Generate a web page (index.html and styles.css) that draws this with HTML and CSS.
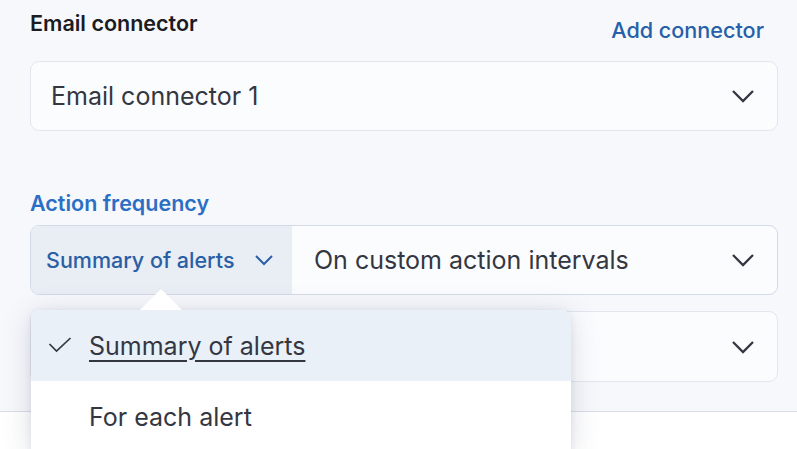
FILE: index.html
```html
<!DOCTYPE html>
<html>
<head>
<meta charset="utf-8">
<link rel="stylesheet" href="styles.css">
</head>
<body>
<div class="panel">
  <div class="head-row">
    <div class="label">Email connector</div>
    <a class="link">Add connector</a>
  </div>
  <div class="select">
    <span class="select-text">Email connector 1</span>
    <svg class="chev" width="24" height="14" viewBox="0 0 24 14"><polyline points="2,2 12,12 22,2" fill="none" stroke="#343741" stroke-width="2.3"/></svg>
  </div>
  <div class="label label-blue">Action frequency</div>
  <div class="group">
    <div class="prepend">
      <span>Summary of alerts</span>
      <svg class="chev-sm" width="20" height="12" viewBox="0 0 20 12"><polyline points="2,2 10,10 18,2" fill="none" stroke="#2a5fa6" stroke-width="2"/></svg>
    </div>
    <div class="group-main">
      <span class="select-text">On custom action intervals</span>
      <svg class="chev" width="24" height="14" viewBox="0 0 24 14"><polyline points="2,2 12,12 22,2" fill="none" stroke="#343741" stroke-width="2.3"/></svg>
    </div>
  </div>
  <div class="select select-second">
    <span class="select-text"></span>
    <svg class="chev" width="24" height="14" viewBox="0 0 24 14"><polyline points="2,2 12,12 22,2" fill="none" stroke="#343741" stroke-width="2.3"/></svg>
  </div>
  <div class="popover">
    <div class="arrow"></div>
    <div class="option option-active">
      <svg class="check" width="24" height="18" viewBox="0 0 24 18"><polyline points="1.5,7 8.5,14 22.5,1" fill="none" stroke="#343741" stroke-width="1.7"/></svg>
      <span class="option-text underline">Summary of alerts</span>
    </div>
    <div class="option">
      <span class="check-space"></span>
      <span class="option-text">For each alert</span>
    </div>
  </div>
</div>
<div class="below"></div>
</body>
</html>
```
FILE: styles.css
```css
html, body {
  margin: 0;
  padding: 0;
  background: #ffffff;
  font-family: Inter, "Noto Sans", sans-serif;
}
body {
  min-height: 449px;
  overflow: hidden;
}
.panel {
  position: relative;
  z-index: 1;
  background: #f7f8fc;
  height: 411px;
  border-bottom: 1px solid #d8dce8;
  padding: 0 19px 0 30px;
}
.below {
  height: 40px;
  background: #ffffff;
}
.head-row {
  display: flex;
  justify-content: space-between;
  align-items: flex-start;
  height: 61px;
}
.label {
  font-size: 21.5px;
  font-weight: 600;
  line-height: 24px;
  color: #1a1c21;
  padding-top: 11px;
}
.link {
  font-size: 21.6px;
  font-weight: 500;
  line-height: 24px;
  color: #2560a8;
  padding-top: 18px;
  margin-right: 14px;
}
.select {
  box-sizing: border-box;
  height: 70px;
  border: 1px solid #e3e6ef;
  border-radius: 9px;
  background: #fbfcfe;
  display: flex;
  align-items: center;
  justify-content: space-between;
  padding: 0 22px 0 20px;
}
.select-text {
  font-size: 25px;
  color: #343741;
}
.chev {
  display: block;
}
.label-blue {
  color: #2b6fc4;
  padding-top: 0;
  margin-top: 58px;
  margin-bottom: 8px;
  line-height: 28px;
}
.group {
  box-sizing: border-box;
  height: 70px;
  border: 1px solid #d3d9e6;
  border-radius: 9px;
  display: flex;
  overflow: hidden;
  background: #fbfcfe;
}
.prepend {
  width: 261px;
  background: #e9edf4;
  display: flex;
  align-items: center;
  padding-left: 15px;
  gap: 19px;
  box-sizing: border-box;
  font-size: 21.5px;
  font-weight: 500;
  color: #2a5fa6;
}
.group-main {
  flex: 1;
  display: flex;
  align-items: center;
  justify-content: space-between;
  padding: 0 22px 0 22px;
}
.select-second {
  margin-top: 16px;
  height: 71px;
}
.popover {
  position: absolute;
  left: 31px;
  top: 310px;
  width: 540px;
  border-radius: 9px 9px 0 0;
  background: #ffffff;
  box-shadow: 0 4px 30px rgba(60, 70, 100, 0.18), 0 1px 6px rgba(60, 70, 100, 0.10);
}
.arrow {
  position: absolute;
  left: 109px;
  top: -21px;
  width: 0;
  height: 0;
  border-left: 21px solid transparent;
  border-right: 21px solid transparent;
  border-bottom: 21px solid #ffffff;
}
.option {
  height: 71px;
  display: flex;
  align-items: center;
  padding-left: 17px;
  gap: 17px;
  background: #ffffff;
}
.option-active {
  background: #e9f0f8;
  border-radius: 9px 9px 0 0;
}
.check {
  display: block;
}
.check-space {
  width: 24px;
}
.option-text {
  font-size: 25px;
  color: #343741;
}
.underline {
  text-decoration: underline;
  text-underline-offset: 5px;
  text-decoration-thickness: 1.5px;
}
```
